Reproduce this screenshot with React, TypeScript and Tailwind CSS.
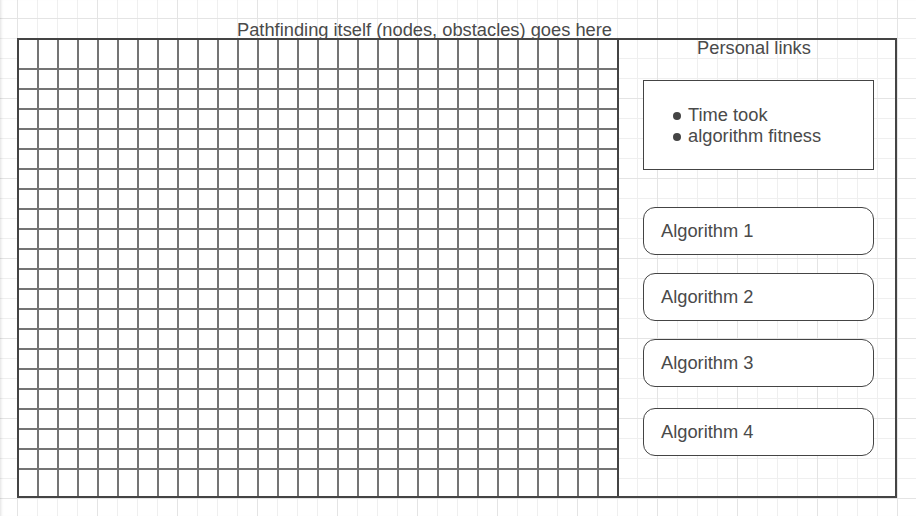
const font = "font-['Liberation_Sans','Arial',sans-serif]";

// 30 columns x 22 rows, first/last rows taller like the mockup
const COLS = 30;
const ROWS = 22;

function NodeGrid() {
  const cells = Array.from({ length: COLS * ROWS });
  return (
    <div className="w-[602px] h-[460px] border-2 border-[#444] bg-[#747474]">
      <div className="grid h-full grid-cols-[repeat(30,18px)] grid-rows-[28px_repeat(20,18px)_26px] gap-[2px]">
        {cells.map((_, i) => (
          <div key={i} className="bg-white" />
        ))}
      </div>
    </div>
  );
}

function AlgorithmButton({ label, className = "" }: { label: string; className?: string }) {
  return (
    <button
      className={`flex h-[48px] w-[231px] items-center rounded-[12px] border border-[#444] bg-white pl-[17px] text-left text-[18.3px] text-[#4a4a4a] ${className}`}
    >
      {label}
    </button>
  );
}

function SidePanel() {
  return (
    <div className="flex h-[460px] w-[278px] flex-col border-y-2 border-r-2 border-[#444] pl-[24px]">
      <div className="pr-[30px] text-center text-[18.3px] leading-[15px] text-[#4a4a4a]">
        Personal links
      </div>
      <div className="mt-[25px] h-[90px] w-[231px] border border-[#444] bg-white pl-[29px] pt-[23px]">
        {["Time took", "algorithm fitness"].map((t) => (
          <div key={t} className="flex items-start text-[18.3px] leading-[21px] text-[#4a4a4a]">
            <span className="mt-[8px] mr-[7px] h-[8px] w-[8px] shrink-0 rounded-full bg-[#444]" />
            {t}
          </div>
        ))}
      </div>
      <AlgorithmButton label="Algorithm 1" className="mt-[37px]" />
      <AlgorithmButton label="Algorithm 2" className="mt-[18px]" />
      <AlgorithmButton label="Algorithm 3" className="mt-[18px]" />
      <AlgorithmButton label="Algorithm 4" className="mt-[21px]" />
    </div>
  );
}

export default function App() {
  return (
    <div
      className={`${font} flex h-[516px] w-[916px] flex-col overflow-hidden bg-white pl-[17px] [background-image:linear-gradient(to_right,#e4e4e4_1px,transparent_1px),linear-gradient(to_bottom,#e4e4e4_1px,transparent_1px),linear-gradient(to_right,#efefef_1px,transparent_1px),linear-gradient(to_bottom,#efefef_1px,transparent_1px)] [background-size:80px_80px,80px_80px,20px_20px,20px_20px] [background-position:17px_18px,17px_18px,17px_18px,17px_18px] shadow-[inset_3px_0_3px_-2px_rgba(0,0,0,0.12)]`}
    >
      <div className="relative z-10 h-[38px] pl-[220px] pt-[19px] text-[18.3px] leading-[21px] whitespace-nowrap text-[#4a4a4a]">
        Pathfinding itself (nodes, obstacles) goes here
      </div>
      <div className="flex">
        <NodeGrid />
        <SidePanel />
      </div>
    </div>
  );
}
